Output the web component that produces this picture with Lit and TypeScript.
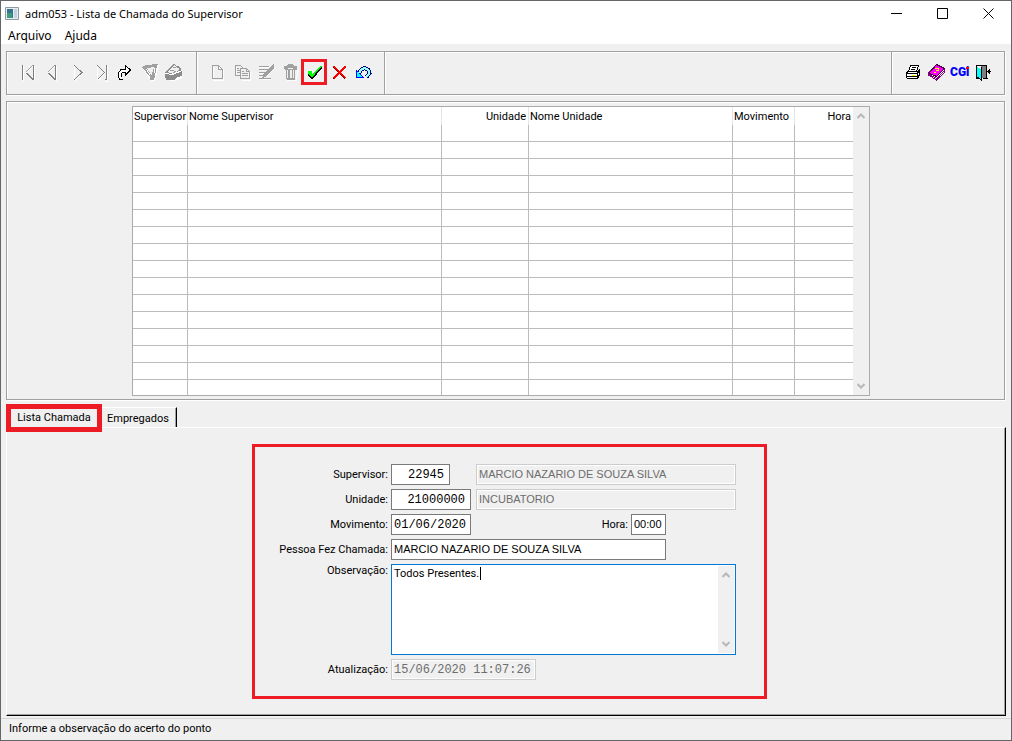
import { LitElement, html, css, svg } from "lit";
import { customElement } from "lit/decorators.js";
import { classMap } from "lit/directives/class-map.js";

type Tool = { label: string; art: unknown; marked?: boolean };
type Column = { title: string; cls: string };

const NAV_TOOLS: Tool[] = [
  {
    label: "Primeiro",
    art: svg`<path class="w" d="M6.500 6v15M17.500 6v15"/><path class="g" d="M5.500 5v15M16.500 5v15M9.500 13l7 7"/><path class="w" d="M9 12.500l7-7"/><path class="s" d="M8.500 12.500l7-7"/>`,
  },
  {
    label: "Anterior",
    art: svg`<path class="w" d="M15.500 6v15"/><path class="g" d="M14.500 5v15M7.500 13l7 7"/><path class="w" d="M7 12.500l7-7"/><path class="s" d="M6.500 12.500l7-7"/>`,
  },
  {
    label: "Próximo",
    art: svg`<path class="w" d="M9.500 6v14M10 20.500l8-7.500"/><path class="g" d="M9.500 5.500l7.500 7-7.500 7"/>`,
  },
  {
    label: "Último",
    art: svg`<path class="w" d="M8.500 6v14M9 20.500l7-7.500M18.500 6v15h-3"/><path class="g" d="M8.500 5.500l7 7-7 7M17.500 5v15M15.500 19.500h2"/>`,
  },
  {
    label: "Ir para",
    art: svg`<path d="M8.500 19.500h-2v-2h-1v-5l2-3 5-1v-3l5 5-5 5v-3l-3 1-1 2z" fill="#fff" stroke="none"/><path class="k" d="M8.500 19.500H7l-1.500-2.500v-4l2-3 2-1h3V5.500l5 4.500-5 5v-3h-2l-2 1.500v3M8.500 19h1"/>`,
  },
  {
    label: "Filtrar",
    art: svg`<path d="M6 9l16-4-4 16h-4z" fill="#fff"/><path d="M5 7l4-2 12-1-1 2-3 14h-4v-3z" fill="#a0a0a0"/><path d="M10 8l7-1-2 7-1 1z" fill="#f0f0f0"/><path d="M9.500 9.500l4 6M17.500 7.500v5" stroke="#fff"/>`,
  },
  {
    label: "Localizar",
    art: svg`<path d="M5 15l16-2v5l-9 3-7-1z" fill="#fff"/><path d="M4 12l9-8 3 2 3 1 2 4v5l-5 1-3 3H5l-1-4z" fill="#8c8c8c"/><path d="M6 12l7-7 2 2 4 2-6 5z" fill="#f0f0f0"/><path d="M4 13.500l8 1 9-4" stroke="#fff"/><path d="M9 10.500h4M12 7.500h3M12 13l3-2" stroke="#a0a0a0"/>`,
  },
];

const EDIT_TOOLS: Tool[] = [
  {
    label: "Novo",
    art: svg`<path class="w" d="M7.500 7v12M17.500 9v11H7M13.500 6v3h3"/><path class="s" d="M6.500 5.500h6l4 4v9h-10zM12.500 5.500v4h4"/>`,
  },
  {
    label: "Copiar",
    art: svg`<path class="w" d="M6.500 7v9M20.500 12v8h-9"/><path class="s" d="M5.500 5.500h5l3 3v6.500h-8z"/><path d="M10.500 8.500h6l3 3v7h-9z" fill="#f0f0f0" stroke="#a0a0a0"/><path class="s" d="M7 8.500h2M7 10.500h3M7 12.500h3M12 11.500h2M12 13.500h6M12 15.500h6M16.500 8.500v3h3"/>`,
  },
  {
    label: "Alterar",
    art: svg`<path class="w" d="M5 7.500h10M6 13.500h6M8 19.500h9M20.500 8l-8 8"/><path class="s" d="M5 6.500h10M5 9.500h9M5 12.500h7M5 15.500h5M5 18.500h12"/><path d="M16 7l4-3v4l-6 7-6 4 2-6z" fill="#a0a0a0"/>`,
  },
  {
    label: "Excluir",
    art: svg`<path class="w" d="M19.500 9v3l-1 8H9"/><path d="M6 6h3l1-2h5l1 2h3v4h-2v9l-1 1H9l-1-1v-8L6 9z" fill="#a0a0a0"/><path d="M9.500 9.500v8M10 8.500h5M15.500 10v8" stroke="#f0f0f0"/><path d="M12 10h2v8h-2z" fill="#f0f0f0"/>`,
  },
  {
    label: "Confirmar",
    marked: true,
    art: svg`<path d="M6 12h4v2l8-8h2v2l-9 11H9l-3-4z" fill="#000"/><path d="M6 11h4v3l8-8h2L10 17.500 6.500 14z" fill="#0f0"/>`,
  },
  {
    label: "Cancelar",
    art: svg`<path d="M7.500 6.500L19.500 18.500M19.500 6.500L7.500 19" stroke="#800000" stroke-width="2"/><path d="M7.500 6l12 12M19.500 6.500L7.500 18.500" stroke="#f00" stroke-width="1.500"/>`,
  },
  {
    label: "Desfazer",
    art: svg`<path d="M9 13l2-3 3-2 4 1.500 1.500 3.500-3 4" stroke="#000080" stroke-width="4"/><path d="M6 9v9h8z" fill="#00f"/><path d="M9 13l2-3 3-2 4 1.500 1.500 3.500-3 4" stroke="#9ff" stroke-width="2"/><path d="M7 12v5h5z" fill="#0ff"/>`,
  },
];

const APP_TOOLS: Tool[] = [
  {
    label: "Imprimir",
    art: svg`<path d="M9.500 5.500h8l-2 6h-8z" fill="#fff" stroke="#000"/><path d="M11 7.500h4M10 9.500h4" stroke="#000"/><path d="M5.500 12.500l2-1h9l2-2v5l-2 4h-10l-1-1z" fill="#fff" stroke="#000"/><path d="M5 13.500h11l3-3M16.500 14v5M6 16.500h10" stroke="#000"/><path d="M11 15.500h4" stroke="#ff0"/>`,
  },
  {
    label: "Ajuda",
    art: svg`<path d="M3.500 13l8-8.500 8 4v4l-8 7.500-8-5z" fill="#fff" stroke="#800080"/><path d="M4 13l7.500-8.500 8 4-8 8z" fill="#f0f" stroke="#400040"/><path d="M4.500 14.500l7 4 8-8" stroke="#800080"/><path d="M9.500 8.500h4v2h-3M9 12.500h2" stroke="#ff0"/>`,
  },
  {
    label: "CGI",
    art: svg`<text x="1" y="16" class="cgi">CGi</text><path d="M17 7h3v2h-3z" fill="#f00"/>`,
  },
  {
    label: "Sair",
    art: svg`<path d="M3 5.500h11M3.500 5v13M3 18.500h4M10 18.500h5M13.500 5v14" stroke="#000"/><path d="M8 6h5v12H8z" fill="#808080"/><path d="M4 7l4 2v11l-4-3z" fill="#0ff"/><path d="M8.500 7v13L4 17" stroke="#000"/><path d="M18 11.500h-4M16.500 9v5M15.500 10v3" stroke="#000"/>`,
  },
];

const COLUMNS: Column[] = [
  { title: "Supervisor", cls: "c-sup" },
  { title: "Nome Supervisor", cls: "c-name" },
  { title: "Unidade", cls: "c-unit num" },
  { title: "Nome Unidade", cls: "c-uname" },
  { title: "Movimento", cls: "c-date" },
  { title: "Hora", cls: "c-hour num" },
];

const EMPTY_ROWS = Array.from({ length: 16 }, (_, i) => i);

@customElement("app-root")
export class AppRoot extends LitElement {
  static styles = css`
    :host {
      display: flex;
      flex-direction: column;
      box-sizing: border-box;
      min-height: 100vh;
      border: 1px solid #656667;
      background: #f0f0f0;
      color: #000;
      font: 11px/14px Roboto, "Liberation Sans", sans-serif;
    }
    * {
      box-sizing: border-box;
    }
    button,
    input,
    textarea {
      font: inherit;
      color: inherit;
      margin: 0;
      border-radius: 0;
    }
    button {
      padding: 0;
      border: 0;
      background: none;
    }
    svg {
      display: block;
      fill: none;
    }

    .titlebar {
      display: flex;
      align-items: center;
      height: 25px;
      padding-left: 4px;
      gap: 6px;
      background: #fff;
      font: 11px/16px "Noto Sans", "Open Sans", sans-serif;
    }
    .title {
      flex: 1;
      margin: 0;
      font: inherit;
    }
    .winctl {
      display: flex;
    }
    .winctl button {
      display: grid;
      place-items: center;
      width: 46px;
      height: 25px;
    }
    .menubar {
      display: flex;
      gap: 13px;
      height: 18px;
      padding-left: 7px;
      background: #fff;
      font: 12px/20px "Noto Sans", "Open Sans", sans-serif;
    }

    .toolbar {
      display: flex;
      height: 44px;
      margin: 7px 6px 0 5px;
      border: 1px solid #a0a0a0;
      box-shadow: 1px 1px #fff;
    }
    .group {
      display: flex;
      align-items: center;
      border-right: 1px solid #a0a0a0;
      box-shadow: inset 1px 1px #fff;
    }
    .group.nav {
      padding: 0 11px 2px 10px;
    }
    .group.edit {
      padding: 0 10px 2px 9px;
    }
    .group.spare {
      flex: 1;
    }
    .group.app {
      padding: 0 7px 2px 9px;
      border-right: 0;
    }
    .tool {
      width: 24px;
      height: 24px;
    }
    .tool.marked {
      outline: 3px solid #ed1c24;
      outline-offset: -2px;
    }
    .g {
      stroke: #808080;
    }
    .s {
      stroke: #a0a0a0;
    }
    .w {
      stroke: #fff;
    }
    .k {
      stroke: #000;
    }
    .cgi {
      fill: #00f;
      font: 900 12px Roboto, "Liberation Sans", sans-serif;
    }

    .list {
      display: flex;
      justify-content: center;
      margin: 6px 6px 0 5px;
      padding: 4px 9px 3px 0;
      border: 1px solid #a0a0a0;
      box-shadow: 1px 1px #fff, inset 1px 1px #fff;
    }
    .grid {
      display: flex;
      border: 1px solid #a9abb0;
      background: #fff;
    }
    table {
      table-layout: fixed;
      width: 720px;
      border-spacing: 0;
    }
    th {
      height: 18px;
      padding: 2px 2px 0 1px;
      border-right: 1px solid #e5e5e5;
      font-weight: 400;
      text-align: left;
      white-space: nowrap;
    }
    th.num {
      text-align: right;
    }
    td {
      height: 17px;
      padding: 0;
      border-right: 1px solid #bcbcbc;
      border-bottom: 1px solid #bcbcbc;
    }
    th:last-child,
    td:last-child {
      border-right: 0;
    }
    tr:last-child td {
      height: 15px;
      border-bottom: 0;
    }
    .c-sup {
      width: 55px;
    }
    .c-name {
      width: 254px;
    }
    .c-unit {
      width: 87px;
    }
    .c-uname {
      width: 204px;
    }
    .c-date {
      width: 62px;
    }
    .c-hour {
      width: 58px;
    }
    .scroll {
      display: flex;
      flex-direction: column;
      justify-content: space-between;
      align-items: center;
      width: 16px;
      padding: 5px 0;
      background: #f0f0f0;
    }

    .tabs {
      display: flex;
      align-items: flex-end;
      height: 27px;
      margin-left: 5px;
    }
    .tab {
      height: 20px;
      padding: 2px 7px 0 5px;
      border-top: 1px solid #fff;
      border-right: 1px solid #000;
      box-shadow: inset -1px 0 #a0a0a0;
    }
    .tab.active {
      z-index: 1;
      height: 28px;
      width: 96px;
      padding: 0;
      margin-bottom: -5px;
      border: 5px solid #ed1c24;
      box-shadow: none;
    }
    .page {
      flex: 1;
      display: flex;
      justify-content: center;
      align-items: flex-start;
      margin: 0 5px 0 5px;
      padding: 16px 0 16px 7px;
      border: 1px solid #fff;
      border-right-color: #000;
      border-bottom-color: #000;
      box-shadow: inset -1px -1px #a0a0a0;
    }

    .form {
      display: grid;
      grid-template-columns: 113px 345px;
      gap: 4px 3px;
      padding: 17px 28px 16px 20px;
      border: 3px solid #ed1c24;
    }
    .form label {
      line-height: 21px;
      text-align: right;
      white-space: nowrap;
    }
    .form label.top {
      line-height: 14px;
    }
    .line {
      display: flex;
      gap: 5px;
    }
    input {
      height: 21px;
      padding: 0 2px 2px;
      border: 1px solid #7a7a7a;
      background: #fff;
      outline: 0;
      font: 11px/14px "Liberation Sans", sans-serif;
    }
    input.mono {
      padding: 0 2px;
      font: 12px/16px "Liberation Mono", monospace;
    }
    input:disabled {
      border-color: #ccc;
      background: #f0f0f0;
      color: #6d6d6d;
      box-shadow: inset 0 0 0 1px #fff;
    }
    input.num {
      padding-right: 5px;
      text-align: right;
    }
    .w-code {
      width: 59px;
    }
    .w-unit {
      width: 80px;
    }
    .w-hour {
      width: 35px;
    }
    .w-person {
      width: 275px;
    }
    .w-stamp {
      width: 145px;
    }
    .w-name {
      width: 260px;
      margin-left: auto;
    }
    .pair {
      display: flex;
      gap: 3px;
      margin-left: auto;
      padding-right: 70px;
    }
    .memo {
      position: relative;
      display: flex;
      height: 91px;
      padding: 1px;
      border: 1px solid #0078d7;
      background: #fff;
    }
    textarea {
      flex: 1;
      min-width: 0;
      padding: 1px;
      border: 0;
      outline: 0;
      resize: none;
      overflow: hidden;
      background: none;
    }
    .caret {
      position: absolute;
      left: 88px;
      top: 2px;
      width: 1px;
      height: 13px;
      background: #000;
    }

    .status {
      height: 22px;
      margin-top: 2px;
      padding-left: 8px;
      border-top: 1px solid #d7d7d7;
      line-height: 20px;
    }
  `;

  private toolGroup(kind: string, tools: Tool[]) {
    return html`<div class="group ${kind}">
      ${tools.map(
        (t) => html`<button
          class=${classMap({ tool: true, marked: !!t.marked })}
          aria-label=${t.label}
        >
          <svg width="24" height="24" viewBox="0 0 24 24" shape-rendering="crispEdges">${t.art}</svg>
        </button>`
      )}
    </div>`;
  }

  private scrollbar() {
    return html`<div class="scroll" aria-hidden="true">
      <svg width="8" height="8" viewBox="0 0 8 8"><path d="M0.500 6L4 2.500 7.500 6" stroke="#b8b8b8" stroke-width="2" /></svg>
      <svg width="8" height="8" viewBox="0 0 8 8"><path d="M0.500 2L4 5.500 7.500 2" stroke="#b8b8b8" stroke-width="2" /></svg>
    </div>`;
  }

  render() {
    return html`
      <header class="titlebar">
        <svg width="14" height="13" viewBox="0 0 14 13">
          <path d="M.5.5h13v12H.5z" fill="#e8eef2" stroke="#8e9aa3" />
          <path d="M2 2h6v9H2z" fill="#35748a" />
          <path d="M2 6h5v5H2z" fill="#3f9a7c" />
          <path d="M9 2h3v9H9z" fill="#c3d3e0" />
        </svg>
        <h1 class="title">adm053 - Lista de Chamada do Supervisor</h1>
        <div class="winctl">
          <button aria-label="Minimizar">
            <svg width="11" height="11" viewBox="0 0 11 11"><path d="M0 5.500h11" stroke="#000" /></svg>
          </button>
          <button aria-label="Maximizar">
            <svg width="11" height="11" viewBox="0 0 11 11"><path d="M.5.5h10v10H.5z" stroke="#000" /></svg>
          </button>
          <button aria-label="Fechar">
            <svg width="11" height="11" viewBox="0 0 11 11"><path d="M.5.5l10 10M10.500.5l-10 10" stroke="#000" /></svg>
          </button>
        </div>
      </header>
      <nav class="menubar">
        <button>Arquivo</button>
        <button>Ajuda</button>
      </nav>

      <div class="toolbar">
        ${this.toolGroup("nav", NAV_TOOLS)} ${this.toolGroup("edit", EDIT_TOOLS)}
        <div class="group spare"></div>
        ${this.toolGroup("app", APP_TOOLS)}
      </div>

      <section class="list">
        <div class="grid">
          <table>
            <thead>
              <tr>
                ${COLUMNS.map((c) => html`<th class=${c.cls}>${c.title}</th>`)}
              </tr>
            </thead>
            <tbody>
              ${EMPTY_ROWS.map(() => html`<tr>${COLUMNS.map(() => html`<td></td>`)}</tr>`)}
            </tbody>
          </table>
          ${this.scrollbar()}
        </div>
      </section>

      <div class="tabs" role="tablist">
        <button class="tab active" role="tab" aria-selected="true">Lista Chamada</button>
        <button class="tab" role="tab" aria-selected="false">Empregados</button>
      </div>
      <section class="page" role="tabpanel">
        <form class="form">
          <label for="sup">Supervisor:</label>
          <div class="line">
            <input id="sup" class="mono num w-code" value="22945" />
            <input class="w-name" aria-label="Nome do supervisor" disabled value="MARCIO NAZARIO DE SOUZA SILVA" />
          </div>
          <label for="unit">Unidade:</label>
          <div class="line">
            <input id="unit" class="mono num w-unit" value="21000000" />
            <input class="w-name" aria-label="Nome da unidade" disabled value="INCUBATORIO" />
          </div>
          <label for="date">Movimento:</label>
          <div class="line">
            <input id="date" class="mono w-unit" value="01/06/2020" />
            <div class="pair">
              <label for="hour">Hora:</label>
              <input id="hour" class="w-hour" value="00:00" />
            </div>
          </div>
          <label for="person">Pessoa Fez Chamada:</label>
          <div class="line">
            <input id="person" class="w-person" value="MARCIO NAZARIO DE SOUZA SILVA" />
          </div>
          <label for="note" class="top">Observação:</label>
          <div class="memo">
            <textarea id="note" .value=${"Todos Presentes. "}></textarea>
            <span class="caret"></span>
            ${this.scrollbar()}
          </div>
          <label for="stamp">Atualização:</label>
          <div class="line">
            <input id="stamp" class="mono w-stamp" disabled value="15/06/2020 11:07:26" />
          </div>
        </form>
      </section>
      <footer class="status">Informe a observação do acerto do ponto</footer>
    `;
  }
}
